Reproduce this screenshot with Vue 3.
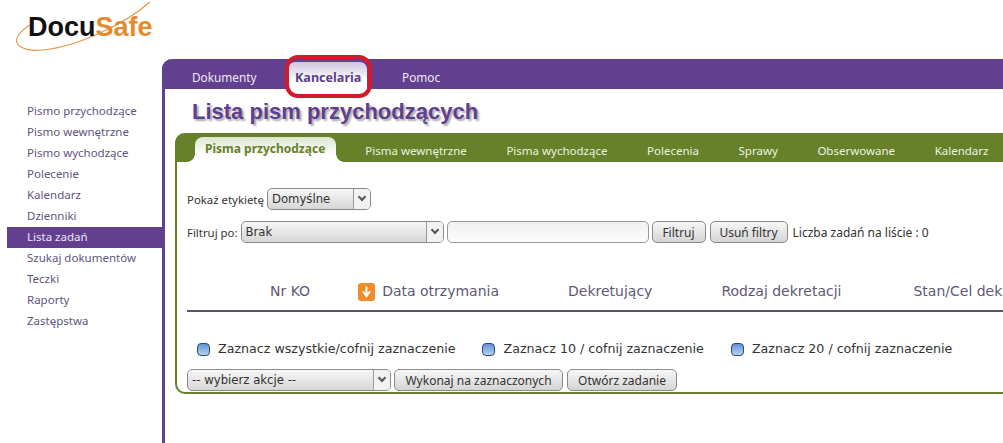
<script setup>
const sideLinks = [
  'Pismo przychodzące',
  'Pismo wewnętrzne',
  'Pismo wychodzące',
  'Polecenie',
  'Kalendarz',
  'Dzienniki',
  'Lista zadań',
  'Szukaj dokumentów',
  'Teczki',
  'Raporty',
  'Zastępstwa'
]
const topTabs = ['Dokumenty', 'Kancelaria', 'Pomoc']
const subTabs = ['Pisma przychodzące', 'Pisma wewnętrzne', 'Pisma wychodzące', 'Polecenia', 'Sprawy', 'Obserwowane', 'Kalendarz']
const columns = ['Data otrzymania', 'Dekretujący', 'Rodzaj dekretacji', 'Stan/Cel dekretacji']
const marks = ['Zaznacz wszystkie/cofnij zaznaczenie', 'Zaznacz 10 / cofnij zaznaczenie', 'Zaznacz 20 / cofnij zaznaczenie']
</script>

<template>
  <div class="page">
    <header class="logo">
      <svg class="logo__swoosh" width="140" height="52" viewBox="0 0 140 52" fill="none">
        <path d="M136 1C112 22 64 46 28 49C8 51 -1 43 4 35C7 30 12 26 18 23" stroke="#e2964a" stroke-width="1.1" />
      </svg>
      <span class="logo__text">Docu<em>Safe</em></span>
    </header>

    <div class="layout">
      <nav class="side">
        <a v-for="link in sideLinks" :key="link" class="side__link" :class="{ 'side__link--active': link === 'Lista zadań' }">{{ link }}</a>
      </nav>

      <main class="main">
        <div class="topbar">
          <a v-for="tab in topTabs" :key="tab" class="topbar__tab" :class="{ 'topbar__tab--active': tab === 'Kancelaria' }">{{ tab }}</a>
        </div>

        <h1 class="title">Lista pism przychodzących</h1>

        <section class="panel">
          <div class="subtabs">
            <a v-for="(tab, index) in subTabs" :key="tab" class="subtabs__tab" :class="{ 'subtabs__tab--active': index === 0 }">{{ tab }}</a>
          </div>

          <div class="panel__body">
            <div class="row row--label">
              <span class="row__text">Pokaż etykietę</span>
              <div class="select select--label"><span>Domyślne</span><i class="select__arrow"></i></div>
            </div>
            <div class="row row--filter">
              <span class="row__text">Filtruj po:</span>
              <div class="select select--filter"><span>Brak</span><i class="select__arrow"></i></div>
              <div class="input"></div>
              <button class="btn btn--filter" type="button">Filtruj</button>
              <button class="btn btn--clear" type="button">Usuń filtry</button>
              <span class="row__count">Liczba zadań na liście : 0</span>
            </div>

            <div class="thead">
              <span class="thead__ko">Nr KO</span>
              <span v-for="(col, index) in columns" :key="col" class="thead__col" :class="`thead__col--${index}`">
                <svg v-if="index === 0" class="sort" width="17" height="18" viewBox="0 0 17 18">
                  <rect x="0" y="0" width="17" height="18" rx="3" fill="#f08c2c" />
                  <path d="M8.5 3.5V11M5 8.5L8.5 13L12 8.5" stroke="#fff" stroke-width="2" fill="none" />
                </svg>
                {{ col }}
              </span>
            </div>

            <div class="marks">
              <span v-for="mark in marks" :key="mark" class="marks__item"><i class="marks__box"></i>{{ mark }}</span>
            </div>

            <div class="row row--actions">
              <div class="select select--action"><span>-- wybierz akcje --</span><i class="select__arrow"></i></div>
              <button class="btn btn--run" type="button">Wykonaj na zaznaczonych</button>
              <button class="btn btn--open" type="button">Otwórz zadanie</button>
            </div>
          </div>
        </section>
      </main>
    </div>
  </div>
</template>

<style>
html, body { margin: 0; background: #fff; overflow: hidden; }
</style>

<style scoped>
.page {
  width: 1003px;
  height: 443px;
  overflow: hidden;
  font-family: "DejaVu Sans", sans-serif;
  background: #fff;
}

.logo {
  position: relative;
  height: 59px;
}

.logo__swoosh {
  position: absolute;
  left: 14px;
  top: 1px;
}

.logo__text {
  position: absolute;
  left: 28px;
  top: 11px;
  font: bold 27px/32px "Liberation Sans", sans-serif;
  color: #111;
}

.logo__text em {
  font-style: normal;
  color: #e78a2e;
}

.layout {
  display: flex;
  height: 384px;
}

.side {
  width: 162px;
  flex: none;
  padding: 42px 0 0 7px;
  box-sizing: border-box;
}

.side__link {
  display: block;
  height: 21px;
  line-height: 20px;
  padding-left: 20px;
  font-family: "Noto Sans", sans-serif;
  font-size: 11.5px;
  color: #5f5480;
  white-space: nowrap;
}

.side__link--active {
  background: #633f8f;
  color: #eee8f5;
}

.main {
  width: 841px;
  flex: none;
  box-sizing: border-box;
  border-left: 3px solid #633f8f;
  border-top-left-radius: 10px;
}

.topbar {
  position: relative;
  display: flex;
  height: 30px;
  margin-left: -3px;
  padding-left: 19px;
  background: #633f8f;
  border-top-left-radius: 10px;
}

.topbar__tab {
  display: block;
  width: 85px;
  box-sizing: border-box;
  margin-top: 3px;
  padding: 0 11px;
  height: 27px;
  line-height: 31px;
  margin-right: 22px;
  font-family: "Noto Sans", sans-serif;
  font-size: 11.8px;
  color: #efeaf5;
}

.topbar__tab--active {
  position: relative;
  width: 79px;
  padding: 0 5px 0 7px;
  margin-right: 24px;
  font-size: 12.6px;
  font-weight: bold;
  color: #5b3f8a;
  border-radius: 7px 7px 0 0;
  background: linear-gradient(#cfc5de, #fff 70%);
  white-space: nowrap;
}

.topbar__tab--active::after {
  content: "";
  position: absolute;
  left: -3px;
  right: -5px;
  top: -7px;
  height: 35px;
  border: 4px solid #d11a2a;
  border-radius: 13px;
}

.title {
  margin: 10px 0 0 27px;
  height: 34px;
  font: bold 22px/26px "Liberation Sans", sans-serif;
  color: #5f3f8e;
  text-shadow: 2px 2px 2px #aaa;
  white-space: nowrap;
}

.panel {
  margin-left: 10px;
  width: 840px;
  height: 261px;
  box-sizing: border-box;
  border: 2px solid #66812a;
  border-top: 0;
  border-right: 0;
  border-radius: 10px 0 0 10px;
}

.subtabs {
  display: flex;
  height: 29px;
  margin-left: -2px;
  padding-left: 20px;
  background: #66812a;
  border-top-left-radius: 10px;
}

.subtabs__tab {
  display: block;
  margin-right: 39.6px;
  line-height: 35px;
  font-family: "Noto Sans", sans-serif;
  font-size: 11.5px;
  color: #eef2e0;
  white-space: nowrap;
}

.subtabs__tab--active {
  position: relative;
  margin-top: 4px;
  margin-right: 29px;
  padding: 0 11px 0 10px;
  height: 25px;
  line-height: 24px;
  font-size: 12px;
  font-weight: bold;
  color: #66812a;
  border-radius: 8px 8px 0 0;
  background: linear-gradient(#dfe6d0, #fff 75%);
}

.subtabs__tab--active::before,
.subtabs__tab--active::after {
  content: "";
  position: absolute;
  bottom: 0;
  width: 8px;
  height: 8px;
}

.subtabs__tab--active::before {
  left: -8px;
  background: radial-gradient(circle at 0 0, transparent 7.5px, #fff 8px);
}

.subtabs__tab--active::after {
  right: -8px;
  background: radial-gradient(circle at 100% 0, transparent 7.5px, #fff 8px);
}

.panel__body {
  padding: 0 0 0 10px;
  font-family: "Noto Sans", sans-serif;
  font-size: 12px;
  color: #333;
}

.row {
  display: flex;
  align-items: center;
  white-space: nowrap;
}

.row__text {
  font-size: 11.4px;
}

.row--label {
  height: 22px;
  margin-top: 26px;
  gap: 3px;
}

.row--filter {
  height: 22px;
  margin-top: 11px;
  gap: 3px;
}

.row__count {
  margin-left: 2px;
}

.select {
  display: flex;
  align-items: center;
  justify-content: space-between;
  box-sizing: border-box;
  height: 22px;
  padding-left: 4px;
  border: 1px solid #8a8a8a;
  border-radius: 5px;
  background: linear-gradient(#f7f7f7, #d6d6d6);
  font-family: "DejaVu Sans", sans-serif;
  font-size: 11.7px;
  color: #333;
}

.select--label { width: 104px; }
.select--filter { width: 203px; }
.select--action { width: 204px; }

.select__arrow {
  position: relative;
  flex: none;
  width: 16px;
  height: 20px;
  border-left: 1px solid #9a9a9a;
  background: #f2f2f2;
  border-radius: 0 4px 4px 0;
}

.select__arrow::after {
  content: "";
  position: absolute;
  left: 5px;
  top: 5px;
  width: 4px;
  height: 4px;
  border-right: 2px solid #555;
  border-bottom: 2px solid #555;
  transform: rotate(45deg);
}

.input {
  width: 202px;
  height: 22px;
  box-sizing: border-box;
  border: 1px solid #9a9a9a;
  border-radius: 5px;
  background: linear-gradient(#f0f0f0, #fcfcfc);
}

.btn {
  height: 22px;
  padding: 0;
  border: 1px solid #8a8a8a;
  border-radius: 5px;
  background: linear-gradient(#f7f7f7, #d4d4d4);
  font-family: "Noto Sans", sans-serif;
  font-size: 12px;
  color: #333;
}

.btn--filter { width: 54px; }
.btn--clear { width: 78px; margin-left: 1px; }
.btn--run { width: 169px; }
.btn--open { width: 110px; margin-left: 1px; }

.thead {
  position: relative;
  display: flex;
  height: 37px;
  margin-top: 30px;
  padding-left: 83px;
  border-bottom: 2px solid #5b5273;
  font-family: "DejaVu Sans", sans-serif;
  font-size: 14px;
  color: #5f5873;
  white-space: nowrap;
  line-height: 37px;
}

.thead__col {
  display: inline-flex;
  align-items: center;
  gap: 7px;
}

.thead__col--0 { margin-left: 48px; }
.thead__col--1 { margin-left: 69px; }
.thead__col--2 { margin-left: 69px; }
.thead__col--3 { margin-left: 72px; }

.marks {
  display: flex;
  height: 20px;
  margin-top: 27px;
  padding-left: 10px;
  gap: 27px;
  font-family: "DejaVu Sans", sans-serif;
  font-size: 12.65px;
  line-height: 20px;
  color: #333;
  white-space: nowrap;
}

.marks__item {
  display: inline-flex;
  align-items: center;
  gap: 8px;
}

.marks__box {
  width: 13px;
  height: 13px;
  box-sizing: border-box;
  border: 1px solid #2f4a70;
  border-radius: 4px;
  background: linear-gradient(#5f92d6, #b6d2f1);
}

.row--actions {
  height: 22px;
  margin-top: 10px;
  gap: 3px;
}
</style>
